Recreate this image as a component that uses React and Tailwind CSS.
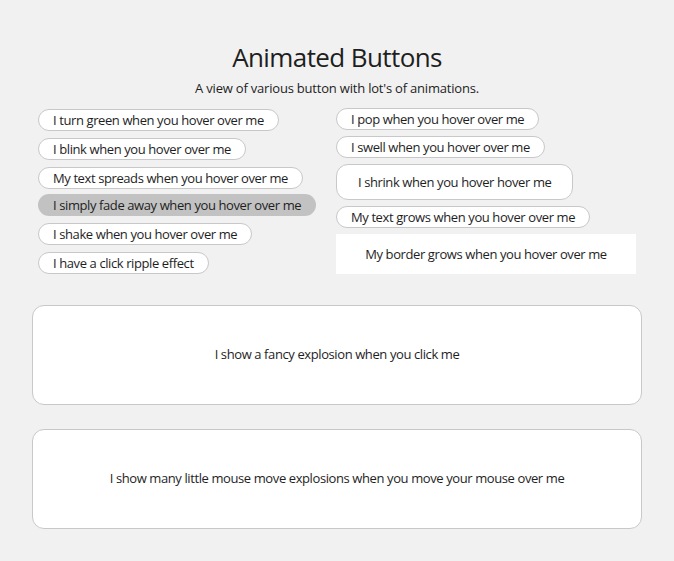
import React from "react";

const pill =
  "inline-flex items-center rounded-full border border-[#c8c8c8] bg-white px-[14px] h-[22px] text-[13px] tracking-[-0.4px] leading-none whitespace-nowrap";

export default function App() {
  return (
    <div className="min-h-[561px] bg-[#f1f1f1] text-[#1e1e1e] font-['Open_Sans',sans-serif]">
      <div className="w-[610px] mx-auto pt-[41px]">
        <h1 className="text-center text-[26px] tracking-[-0.6px] leading-[32px]">Animated Buttons</h1>
        <p className="text-center text-[13px] tracking-[-0.2px] leading-[18px] mt-[6px]">
          A view of various button with lot's of animations.
        </p>
        <div className="grid grid-cols-2 mt-[12px]">
          <div className="flex flex-col items-start gap-[7px] pl-[6px]">
            <button className={pill}>I turn green when you hover over me</button>
            <button className={pill}>I blink when you hover over me</button>
            <button className={pill}>My text spreads when you hover over me</button>
            <button className="-mt-[2px] inline-flex items-center rounded-full bg-[#c2c2c2] px-[15px] h-[22px] text-[13px] tracking-[-0.4px] leading-none whitespace-nowrap">
              I simply fade away when you hover over me
            </button>
            <button className={pill}>I shake when you hover over me</button>
            <button className={pill}>I have a click ripple effect</button>
          </div>
          <div className="flex flex-col items-start gap-[6px] -ml-px -mt-px">
            <button className={pill}>I pop when you hover over me</button>
            <button className={pill}>I swell when you hover over me</button>
            <button className="inline-flex items-center rounded-[12px] border border-[#c8c8c8] bg-white px-[21px] h-[36px] text-[13px] tracking-[-0.4px] leading-none whitespace-nowrap">
              I shrink when you hover hover me
            </button>
            <button className={pill}>My text grows when you hover over me</button>
            <button className="flex items-center justify-center bg-white w-[300px] h-[40px] text-[13px] tracking-[-0.4px] leading-none whitespace-nowrap">
              My border grows when you hover over me
            </button>
          </div>
        </div>
        <div className="mt-[31px] flex items-center justify-center h-[100px] rounded-[12px] border border-[#c8c8c8] bg-white text-[13px] tracking-[-0.4px]">
          I show a fancy explosion when you click me
        </div>
        <div className="mt-[24px] flex items-center justify-center h-[100px] rounded-[12px] border border-[#c8c8c8] bg-white text-[13px] tracking-[-0.4px]">
          I show many little mouse move explosions when you move your mouse over me
        </div>
      </div>
    </div>
  );
}
